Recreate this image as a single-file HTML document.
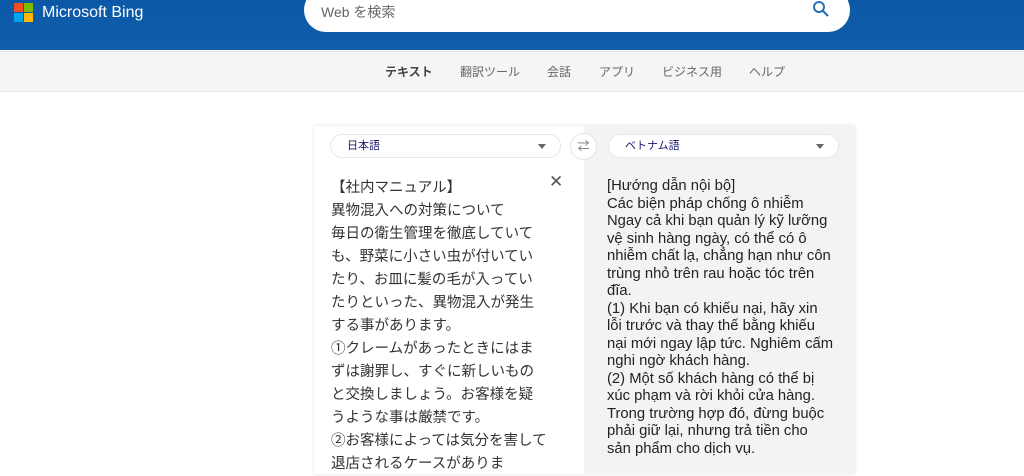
<!DOCTYPE html>
<html><head><meta charset="utf-8"><style>
*{margin:0;padding:0;box-sizing:border-box}
body{width:1024px;height:474px;overflow:hidden;background:#fff;font-family:"Liberation Sans","Noto Sans CJK JP",sans-serif;position:relative}
.hdr{position:absolute;left:0;top:0;width:1024px;height:50px;background:linear-gradient(#0c58a8,#0f5ea9)}
.logo{position:absolute;left:14px;top:3px;width:20px;height:20px}
.logo i{position:absolute;width:9px;height:9px}
.brand{position:absolute;left:42px;top:4px;color:#fff;font-size:16px}
.search{position:absolute;left:304px;top:-12px;width:546px;height:44px;background:#fff;border-radius:22px}
.search span{position:absolute;left:17px;top:14px;font-size:14px;color:#666}
.nav{position:absolute;left:0;top:51px;width:1024px;height:41px;background:#f5f5f5;border-top:1px solid #dde6ee;border-bottom:1px solid #e6e6e6}
.nav span{position:absolute;top:11px;font-size:12px;color:#666}
.panel{position:absolute;left:314px;top:126px;width:541px;height:348px;background:#fff;box-shadow:0 0 4px rgba(0,0,0,.12)}
.right{position:absolute;left:270px;top:0;width:271px;height:348px;background:#f3f3f3}
.sel{position:absolute;top:8px;height:24px;border-radius:12px;background:#fff;border:1px solid #e8e8e8;font-size:11px;line-height:12px;color:#1a1a6e;padding:5px 16px}
.sel:after{content:"";position:absolute;right:14px;top:9px;border:4px solid transparent;border-top:5px solid #666}
.ltxt{position:absolute;left:17px;top:51px;width:216px;font-size:14.5px;line-height:23px;color:#333}
.rtxt{position:absolute;left:293px;top:52px;width:245px;font-size:14.8px;line-height:17.5px;color:#222}
</style></head><body>
<div class="hdr">
<div class="logo"><i style="left:0;top:0;background:#f25022"></i><i style="left:10px;top:0;background:#7fba00"></i><i style="left:0;top:10px;background:#00a4ef"></i><i style="left:10px;top:10px;background:#ffb900"></i></div>
<div class="brand">Microsoft Bing</div>
<div class="search"><span>Web を検索</span>
<svg style="position:absolute;left:508px;top:12px" width="18" height="18" viewBox="0 0 18 18"><circle cx="7" cy="7" r="5" fill="none" stroke="#2a6fb5" stroke-width="2"/><path d="M11 11l5 5" stroke="#2a6fb5" stroke-width="2.2"/></svg></div>
</div>
<div class="nav">
<span style="left:385px;font-weight:bold;color:#444">テキスト</span>
<span style="left:460px">翻訳ツール</span>
<span style="left:547px">会話</span>
<span style="left:599px">アプリ</span>
<span style="left:662px">ビジネス用</span>
<span style="left:749px">ヘルプ</span>
</div>
<div class="panel">
<div class="right"></div>
<div class="sel" style="left:16px;width:231px">日本語</div>
<div style="position:absolute;left:256px;top:7px;width:27px;height:27px;border-radius:50%;background:#fff;border:1px solid #e4e4e4;font-size:12px;color:#777;text-align:center;line-height:25px">⇄</div>
<div class="sel" style="left:294px;width:231px">ベトナム語</div>
<div style="position:absolute;left:235px;top:46px;font-size:17px;color:#555">✕</div>
<div class="ltxt">【社内マニュアル】<br>異物混入への対策について<br>毎日の衛生管理を徹底していても、野菜に小さい虫が付いていたり、お皿に髪の毛が入っていたりといった、異物混入が発生する事があります。<br>①クレームがあったときにはまずは謝罪し、すぐに新しいものと交換しましょう。お客様を疑うような事は厳禁です。<br>②お客様によっては気分を害して退店されるケースがありま</div>
<div class="rtxt">[Hướng dẫn nội bộ]<br>Các biện pháp chống ô nhiễm<br>Ngay cả khi bạn quản lý kỹ lưỡng<br>vệ sinh hàng ngày, có thể có ô<br>nhiễm chất lạ, chẳng hạn như côn<br>trùng nhỏ trên rau hoặc tóc trên<br>đĩa.<br>(1) Khi bạn có khiếu nại, hãy xin<br>lỗi trước và thay thế bằng khiếu<br>nại mới ngay lập tức. Nghiêm cấm<br>nghi ngờ khách hàng.<br>(2) Một số khách hàng có thể bị<br>xúc phạm và rời khỏi cửa hàng.<br>Trong trường hợp đó, đừng buộc<br>phải giữ lại, nhưng trả tiền cho<br>sản phẩm cho dịch vụ.</div>
</div>
</body></html>
